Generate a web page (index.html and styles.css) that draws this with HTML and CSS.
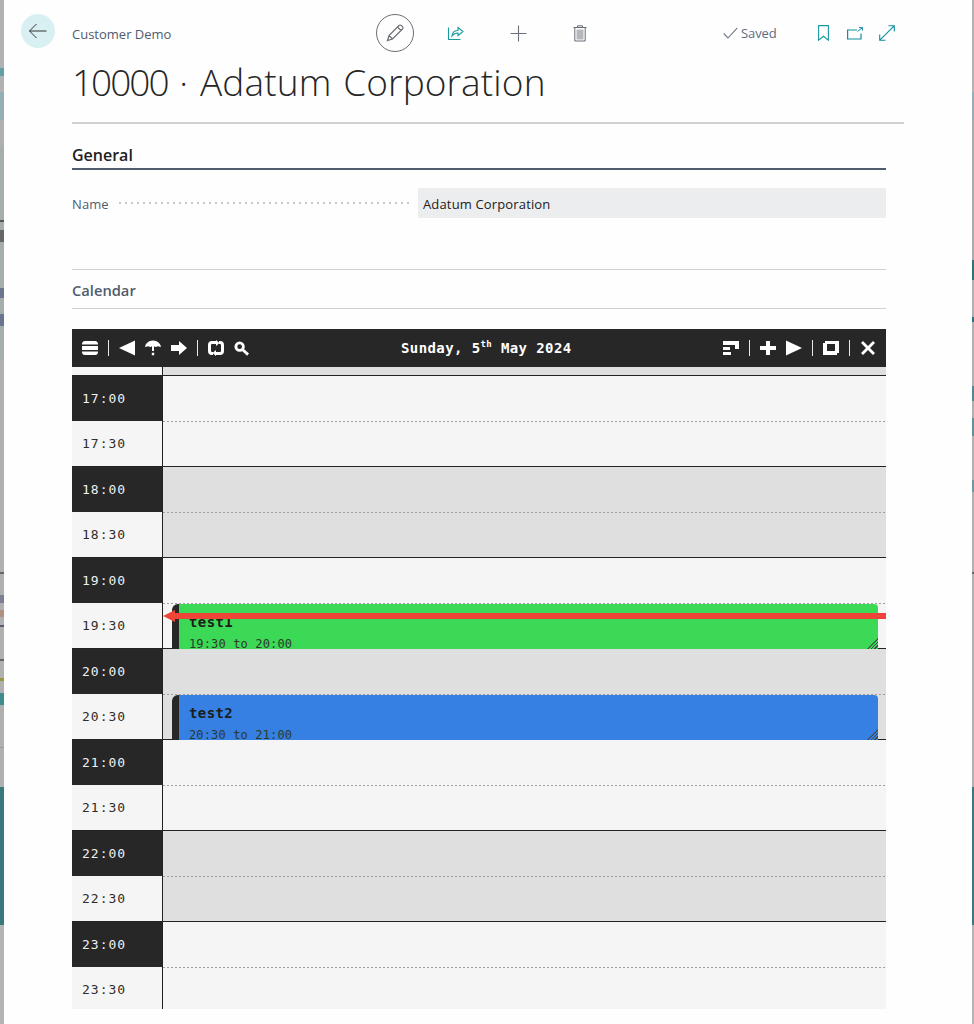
FILE: index.html
```html
<!DOCTYPE html>
<html lang="en">
<head>
<meta charset="utf-8">
<title>10000 · Adatum Corporation</title>
<link rel="stylesheet" href="styles.css">
</head>
<body>
<div class="page">
  <div class="strip strip-left"></div>
  <main class="card">
    <button class="back" aria-label="Back">
      <svg width="20" height="16" viewBox="0 0 20 16"><path d="M18.5 8H1.5M8.5 1 1.5 8l7 7" fill="none" stroke="#333" stroke-width="1"/></svg>
    </button>
    <header class="top">
      <div class="crumb">Customer Demo</div>
      <div class="actions">
        <span class="edit"><svg width="20" height="20" viewBox="0 0 20 20"><path d="M2.5 17.5 4 12.5 14 2.5a1.6 1.6 0 0 1 2.3 0l1.2 1.2a1.6 1.6 0 0 1 0 2.3L7.5 16ZM4 12.5 7.500 16M12.500 4l3.500 3.500" fill="none" stroke="#6b6f75" stroke-width="1.2"/></svg></span>
        <span class="act act-share"><svg width="17" height="16" viewBox="0 0 17 16"><path d="M1.5 2.5V14.5H13.5M5 11C5.5 7 8.5 5.5 11 5.5V2.5L16 6.5 11 10.5V8C8.5 8 6.5 9 5 11Z" fill="none" stroke="#1a9aa0" stroke-width="1.1"/></svg></span>
        <span class="act act-plus"><svg width="17" height="17" viewBox="0 0 17 17"><path d="M8.5 .5V16.5M.5 8.5H16.5" stroke="#6b7078" stroke-width="1.1"/></svg></span>
        <span class="act act-trash"><svg width="14" height="17" viewBox="0 0 14 17"><path d="M4.500 2V.8H9.500V2" fill="none" stroke="#666c74"/><path d="M.5 2.500H13.500" stroke="#666c74"/><path d="M1.800 2.500V16H12.200V2.500" fill="none" stroke="#666c74"/><rect x="3.500" y="4.500" width="7" height="10" fill="#b5b7bc"/></svg></span>
      </div>
      <div class="status">
        <svg width="15" height="12" viewBox="0 0 15 12"><path d="M.7 6.5 5 11 14.3 .8" fill="none" stroke="#6b7a8c" stroke-width="1.1"/></svg>
        <span class="saved">Saved</span>
      </div>
      <div class="tools">
        <svg class="tool tool-mark" width="11" height="16" viewBox="0 0 11 16"><path d="M.6.6H10.4V15.2L5.5 11.2.6 15.2Z" fill="none" stroke="#1a9aa0" stroke-width="1.1"/></svg>
        <svg class="tool" width="16" height="13" viewBox="0 0 16 13"><path d="M10 3H.6V12H14V6.500" fill="none" stroke="#0f8ea0" stroke-width="1.2"/><path d="M10.500 4.500 15.300.7M12 .6H15.400V3.600" fill="none" stroke="#0f8ea0" stroke-width="1"/></svg>
        <svg class="tool" width="16" height="16" viewBox="0 0 16 16"><path d="M.8 15.200 15.200.8M9.500.7H15.300V6.500M.7 9.500V15.300H6.500" fill="none" stroke="#0f8ea0" stroke-width="1.1"/></svg>
      </div>
    </header>
    <h1 class="title"><span class="title-num">10000</span> · Adatum Corporation</h1>

    <div class="content">
      <section class="general">
        <h2 class="general-head">General</h2>
        <div class="field">
          <label class="field-label">Name</label>
          <span class="field-dots"></span>
          <span class="field-value">Adatum Corporation</span>
        </div>
      </section>
      <h2 class="cal-head">Calendar</h2>

      <section class="cal">
        <div class="bar">
          <div class="bar-group">
            <svg class="ico" viewBox="0 0 16 16"><path d="M3 1H13Q16 1 16 4.500H0Q0 1 3 1ZM0 6H16V10H0ZM0 11.500H16Q16 15 13 15H3Q0 15 0 11.500Z" fill="#fff"/></svg>
            <span class="sep"></span>
            <svg class="ico" viewBox="0 0 16 16"><path d="M0 8 16 .5V15.500Z" fill="#fff"/></svg>
            <svg class="ico" viewBox="0 0 16 16"><path d="M8 .5C3.500.5.500 3.500 0 7L3 6.200 5.500 7 7 6.200V11H9V6.200L10.500 7 13 6.200 16 7C15.500 3.500 12.500.5 8 .5ZM6.800 12.800H9.200V15.200H6.800Z" fill="#fff"/></svg>
            <svg class="ico" viewBox="0 0 16 16"><path d="M0 5H8V1L16 8 8 15V11H0Z" fill="#fff"/></svg>
            <span class="sep"></span>
            <svg class="ico" viewBox="0 0 16 16"><path d="M8 2.500H4Q1.500 2.500 1.500 5V11Q1.500 13.500 4 13.500H5M8 13.500H12Q14.500 13.500 14.500 11V5Q14.500 2.500 12 2.500H11" fill="none" stroke="#fff" stroke-width="3"/><path d="M8 0V6L11.500 3ZM8 10V16L4.500 13Z" fill="#fff"/></svg>
            <svg class="ico ico-search" viewBox="0 0 16 16"><circle cx="6" cy="6" r="4" fill="none" stroke="#fff" stroke-width="3"/><path d="M9 9 15 14.500" stroke="#fff" stroke-width="3"/></svg>
          </div>
          <div class="bar-title">Sunday, 5<sup class="th">th</sup> May 2024</div>
          <div class="bar-group">
            <svg class="ico" viewBox="0 0 16 16"><path d="M0 1H16V5H0ZM12 5H16V9H12ZM0 7H7V10H0ZM0 12H8V15H0Z" fill="#fff"/></svg>
            <span class="sep"></span>
            <svg class="ico" viewBox="0 0 16 16"><path d="M6 1H10V6H16V10H10V15H6V10H0V6H6Z" fill="#fff"/></svg>
            <svg class="ico" viewBox="0 0 16 16"><path d="M0 .5 16 8 0 15.500Z" fill="#fff"/></svg>
            <span class="sep"></span>
            <svg class="ico" viewBox="0 0 16 16"><path fill-rule="evenodd" d="M2 1H16V13H14V15H0V3H2ZM4 4V11H12V4Z" fill="#fff"/></svg>
            <span class="sep"></span>
            <svg class="ico" viewBox="0 0 16 16"><path d="M1 3 3 1 8 6 13 1 15 3 10 8 15 13 13 15 8 10 3 15 1 13 6 8 1 3Z" fill="#fff"/></svg>
          </div>
        </div>

        <div class="grid">
          <div class="head-row"><span class="head-time"></span><span class="head-slot"></span></div>

          <div class="hour hour-light">
            <div class="time time-dark">17:00</div><div class="slot"></div>
            <div class="time">17:30</div><div class="slot slot-half"></div>
          </div>
          <div class="hour hour-grey">
            <div class="time time-dark">18:00</div><div class="slot"></div>
            <div class="time">18:30</div><div class="slot slot-half"></div>
          </div>
          <div class="hour hour-light">
            <div class="time time-dark">19:00</div><div class="slot"></div>
            <div class="time">19:30</div>
            <div class="slot slot-half">
              <div class="event event-green">
                <div class="event-title">test1</div>
                <div class="event-time">19:30 to 20:00</div>
                <span class="event-grip"></span>
              </div>
              <div class="now"></div>
            </div>
          </div>
          <div class="hour hour-grey">
            <div class="time time-dark">20:00</div><div class="slot"></div>
            <div class="time">20:30</div>
            <div class="slot slot-half">
              <div class="event event-blue">
                <div class="event-title">test2</div>
                <div class="event-time">20:30 to 21:00</div>
                <span class="event-grip"></span>
              </div>
            </div>
          </div>
          <div class="hour hour-light">
            <div class="time time-dark">21:00</div><div class="slot"></div>
            <div class="time">21:30</div><div class="slot slot-half"></div>
          </div>
          <div class="hour hour-grey">
            <div class="time time-dark">22:00</div><div class="slot"></div>
            <div class="time">22:30</div><div class="slot slot-half"></div>
          </div>
          <div class="hour hour-light">
            <div class="time time-dark">23:00</div><div class="slot"></div>
            <div class="time">23:30</div><div class="slot slot-half"></div>
          </div>
        </div>
      </section>
    </div>
  </main>
  <div class="strip strip-right"></div>
</div>
</body>
</html>
```
FILE: styles.css
```css
* { box-sizing: border-box; }
html, body { margin: 0; height: 100%; overflow: hidden; background: #fefefe; }
body { font-family: "Open Sans", "Noto Sans", sans-serif; color: #212121; }

.page { display: flex; height: 1024px; }

.strip { flex: none; }
.strip-left {
  width: 4px;
  background: linear-gradient(to bottom,
    #b2b2b2 0 68px, #5f9fa5 68px 76px, #b2b2b2 76px 92px, #93b1b5 92px 120px, #b0b0b0 120px 147px,
    #a5adad 147px 220px, #555 220px 222px, #a5adad 222px 230px, #666 230px 242px,
    #a5adad 242px 288px, #6a7690 288px 298px, #a5adad 298px 314px, #6a7690 314px 326px,
    #a5adad 326px 360px,
    #b0b0b0 360px 572px, #666 572px 574px, #b0b0b0 574px 595px, #7b8190 595px 603px,
    #b0b0b0 603px 610px, #b09080 610px 617px, #b0b0b0 617px 625px, #555e70 625px 627px,
    #b0b0b0 627px 659px, #666 659px 661px, #b0b0b0 661px 678px, #99973c 678px 681px,
    #b0b0b0 681px 693px, #3e8c90 693px 705px, #b0b0b0 705px 747px, #999 747px 748px,
    #b0b0b0 748px 787px, #38797d 787px 925px,
    #b4b4b4 925px 1024px);
}
.strip-right {
  width: 2px;
  background: linear-gradient(to bottom,
    #b2b2b2 0 92px, #93b1b5 92px 120px, #a5adad 120px 260px, #2f7378 260px 280px,
    #b0b0b0 280px 317px, #2f7378 317px 322px, #b0b0b0 322px 386px, #4f8a8e 386px 401px,
    #b0b0b0 401px 418px, #5f9497 418px 436px, #b0b0b0 436px 480px, #69999c 480px 492px,
    #b0b0b0 492px 572px, #666 572px 574px, #b0b0b0 574px 787px, #38797d 787px 925px,
    #b4b4b4 925px 1024px);
}

.card { flex: 1; min-width: 0; position: relative; padding: 0 68px; }

.back {
  position: absolute; left: 17px; top: 14px;
  width: 34px; height: 34px; border: 0; border-radius: 50%; padding: 0;
  background: #d9f0f2;
  display: flex; align-items: center; justify-content: center;
}

.top { height: 66px; display: flex; align-items: center; position: relative; }
.crumb { width: 304px; font-size: 13px; color: #505c6d; padding-top: 1px; }
.actions { display: flex; align-items: center; width: 347px; }
.edit {
  width: 38px; height: 38px; border-radius: 50%; border: 1px solid #6b6f75;
  display: flex; align-items: center; justify-content: center;
}
.act { display: flex; justify-content: center; width: 17px; }
.act-share { margin-left: 33px; }
.act-plus { margin-left: 46px; }
.act-trash { margin-left: 44px; }
.status { display: flex; align-items: center; gap: 3px; width: 95px; }
.saved { font-size: 13px; color: #5d6b80; letter-spacing: -.1px; }
.tools { display: flex; align-items: center; gap: 16px; }
.tool { display: block; }
.tool-mark { margin-right: 2px; }

.title {
  margin: -9px 0 0; font-weight: 300; font-size: 37px; line-height: 50px; height: 67px;
  color: #262626; border-bottom: 2px solid #d0d0d2; word-spacing: 2px; letter-spacing: .12px; white-space: nowrap;
}
.title-num { letter-spacing: -2px; }

.content { padding-right: 18px; }

.general-head {
  margin: 19px 0 0; font-size: 16px; font-weight: 600; line-height: 24px;
  height: 27px; color: #212121; border-bottom: 2px solid #505c6d;
}
.field { display: flex; align-items: center; height: 30px; margin-top: 18px; }
.field-label { font-size: 13px; color: #505c6d; width: 45px; letter-spacing: .1px; padding-top: 2px; }
.field-dots { width: 295px; height: 2px; background: radial-gradient(circle, #c8c8c8 1px, transparent 1.2px) 0 0 / 6px 2px repeat-x; }
.field-value {
  margin-left: 6px; flex: 1; height: 30px; line-height: 32px; padding-left: 5px;
  background: #ecedee; font-size: 13px; color: #212121; letter-spacing: .15px;
}

.cal-head {
  margin: 51px 0 0; height: 40px; line-height: 41px; font-size: 14.7px; font-weight: 600;
  color: #505c6d; border-top: 1px solid #d0d0d0; border-bottom: 1px solid #d0d0d0;
}

.cal { margin-top: 20px; height: 680px; display: flex; flex-direction: column; overflow: hidden; font-family: "DejaVu Sans Mono", monospace; }

.bar {
  height: 38px; flex: none; background: #272727; color: #fff;
  display: flex; align-items: center; justify-content: space-between; padding: 0 10px;
  position: relative;
}
.bar-group { display: flex; align-items: center; gap: 10px; }
.ico { display: block; width: 16px; height: 16px; }
.ico-search { width: 15px; height: 15px; }
.sep { width: 1px; height: 16px; background: #e8e8e8; }
.bar-title { font-size: 14px; font-weight: 700; letter-spacing: .4px; position: absolute; left: 329px; top: 9px; line-height: 20px; white-space: nowrap; }
.th { font-size: 9px; line-height: 0; font-weight: 700; }

.grid { flex: 1; min-height: 0; overflow: hidden; }
.head-row { display: grid; grid-template-columns: 91px 1fr; height: 8px; }
.head-time { background: #f5f5f5; border-right: 1px solid #222; }
.head-slot { background: #dfdfdf; }

.hour {
  display: grid; grid-template-columns: 91px 1fr; grid-template-rows: 46px 45px;
  box-shadow: inset 0 1px 0 #222;
}
.hour-light .slot { background-color: #f5f5f5; }
.hour-grey .slot { background-color: #dfdfdf; }

.time {
  background: #f5f5f5; color: #2d2d2d; border-right: 1px solid #222;
  font-size: 13px; letter-spacing: 1px; padding-left: 10px; line-height: 46px;
}
.time-dark { background: #272727; color: #f0f0f0; border-top: 1px solid #222; }
.slot { position: relative; border-top: 1px solid #222; }
.slot-half {
  border-top: 1px solid transparent;
  background-image: linear-gradient(to right, #a0a0a0 0 2px, transparent 2px 4px);
  background-size: 4px 1px; background-repeat: repeat-x; background-origin: border-box; background-clip: border-box;
}

.event {
  position: absolute; left: 9px; right: 8px; top: 0; height: 45px; overflow: hidden;
  border-left: 7px solid #272727;
  border-radius: 6px 4px 0 0;
  padding: 9px 0 0 10px; color: #1c1c1c; z-index: 1;
}
.event-green { background: #3bd955; }
.event-blue { background: #3580e2; }
.event-title { font-size: 14px; font-weight: 700; line-height: 18px; letter-spacing: .4px; }
.event-time { font-size: 12px; line-height: 14px; margin-top: 6px; letter-spacing: .15px; color: #2c3a2c; }
.event-grip {
  position: absolute; right: 0; bottom: 0; width: 11px; height: 11px;
  background: repeating-linear-gradient(135deg, #444 0 1px, transparent 1px 2.5px);
  clip-path: polygon(100% 0, 100% 100%, 0 100%);
}

.now {
  position: absolute; left: 11px; right: 0; top: 9px; height: 6px; background: #ef4438; z-index: 2;
}
.now::before {
  content: ""; position: absolute; left: -11px; top: -3px; width: 12px; height: 12px;
  background: #ef4438; clip-path: polygon(0 50%, 100% 0, 100% 100%);
}
```
